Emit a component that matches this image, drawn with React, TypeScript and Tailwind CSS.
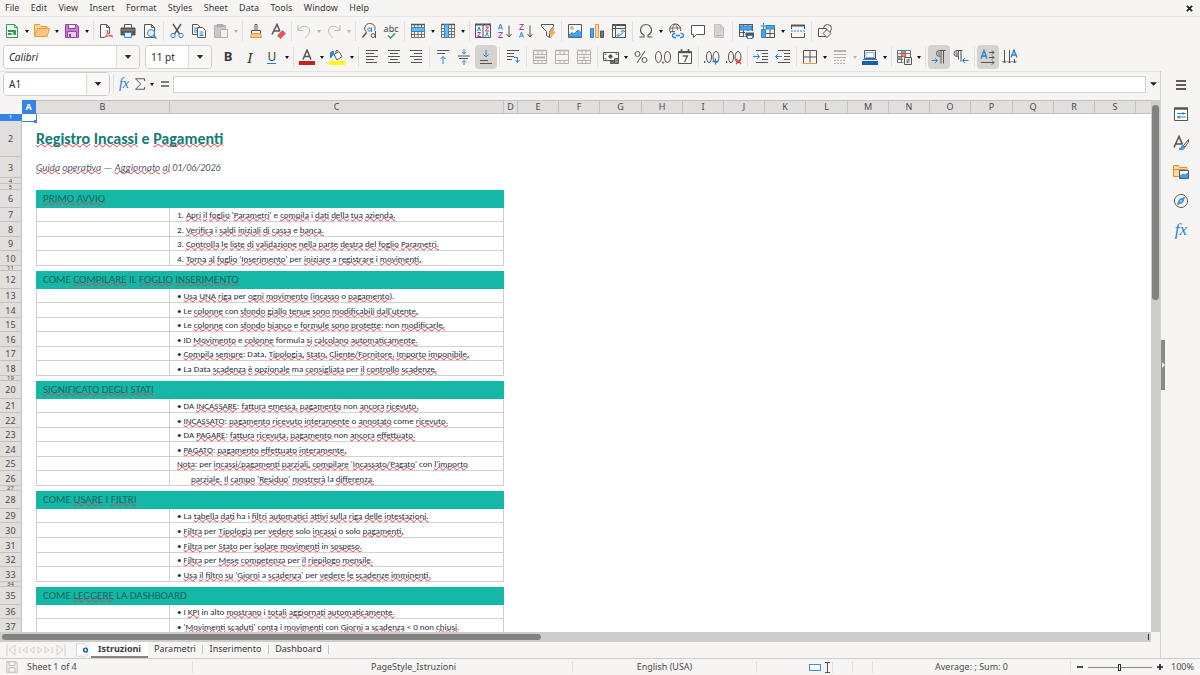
import React from "react";

const INK = "#555553";
const BLUE = "#2a86d4";

type IconProps = { children: React.ReactNode; className?: string };

function Icon({ children, className = "size-4" }: IconProps) {
  return (
    <svg viewBox="0 0 16 16" className={className} fill="none" stroke={INK} strokeWidth="1" aria-hidden="true">
      {children}
    </svg>
  );
}

type ToolProps = { label: string; children: React.ReactNode; active?: boolean; disabled?: boolean };

function Tool({ label, children, active, disabled }: ToolProps) {
  return (
    <button
      type="button"
      aria-label={label}
      aria-pressed={active}
      disabled={disabled}
      className={`flex h-6 w-[22px] min-w-0 items-center justify-center rounded ${active ? "bg-[#d5d2cf]" : ""}`}
    >
      {children}
    </button>
  );
}

function Arrow({ label, disabled }: { label: string; disabled?: boolean }) {
  return (
    <button type="button" aria-label={label} disabled={disabled} className="flex h-6 w-2 min-w-0 items-center justify-center">
      <svg viewBox="0 0 4 3" className="h-[3px] w-1 shrink-0" aria-hidden="true">
        <path d="M0 0h4L2 3z" fill={disabled ? "#b5b3b1" : "#111"} />
      </svg>
    </button>
  );
}

function Sep() {
  return (
    <div className="flex w-[5px] min-w-0 justify-center">
      <div className="h-5 w-px bg-[#e0dfdd]" />
    </div>
  );
}

const page = "M3.5 1.5h6l3 3v10h-9z M9.5 1.5v3h3";

function StandardBar() {
  return (
    <div role="toolbar" aria-label="Standard" className="ml-px flex h-7 w-full max-w-[835px] items-center">
      <Tool label="New">
        <Icon>
          <path d="M2.5 1.5h8l3 3v10h-11z" stroke="#2f9e54" fill="#fff" />
          <path d="M10.500 1.5v3h3" stroke="#2f9e54" />
          <path d="M4 7h8v5H4z" fill="#2f9e54" stroke="none" />
          <path d="M4 9.500h5 M7 11h3" stroke="#fff" />
        </Icon>
      </Tool>
      <Arrow label="New options" />
      <Tool label="Open">
        <Icon>
          <path d="M.5 13.500v-12h5l1.500 2h6v2" stroke="#e79a3c" fill="#fbd9a0" />
          <path d="M.5 13.500l3-8h12l-2.500 8z" stroke="#e79a3c" fill="#fbc883" />
        </Icon>
      </Tool>
      <Arrow label="Recent files" />
      <Tool label="Save">
        <Icon>
          <path d="M1.500 1.500h11l2 2v11h-13z" stroke="#9c3fae" fill="#c77bd3" />
          <path d="M4.500 1.500h7v4h-7z" stroke="#9c3fae" fill="#fff" />
          <path d="M3.500 8.500h9v6h-9z" stroke="#9c3fae" fill="#e9c9ee" />
          <path d="M6 11v3" stroke="#9c3fae" strokeWidth="2" />
        </Icon>
      </Tool>
      <Arrow label="Save options" />
      <Sep />
      <Tool label="Export as PDF">
        <Icon>
          <path d="M2.500 14.500v-13h6l3 3v6 M8.500 1.500v3h3 M2.500 14.500h4" fill="#fff" />
          <path d="M7 14c2-2 3-5 2.500-6.500s-1 0 .5 2.500 3 3.500 4.500 3.500-1.500-2-7.500.5z" stroke="#e0373d" />
        </Icon>
      </Tool>
      <Tool label="Print">
        <Icon>
          <path d="M4.500 5v-3.500h7V5" fill="#fff" />
          <path d="M1 5h14v7H1z" fill={INK} />
          <path d="M2 7h12" stroke="#999" />
          <path d="M4.500 9.500h7v5h-7z" stroke={BLUE} fill="#e4f1fb" />
        </Icon>
      </Tool>
      <Tool label="Print preview">
        <Icon>
          <path d="M2.500 1.500h7l3 3v10h-10z M9.500 1.500v3h3" fill="#fff" />
          <circle cx="9" cy="10" r="3.500" stroke={BLUE} fill="#e4f1fb" />
          <path d="M11.500 12.500l3 3" stroke={BLUE} strokeWidth="1.500" />
        </Icon>
      </Tool>
      <Sep />
      <Tool label="Cut">
        <Icon>
          <path d="M4 1l6.500 10 M12 1L5.500 11" strokeWidth="1.400" />
          <circle cx="4" cy="12.500" r="2.200" stroke={BLUE} />
          <circle cx="12" cy="12.500" r="2.200" stroke={BLUE} />
        </Icon>
      </Tool>
      <Tool label="Copy">
        <Icon>
          <path d="M1.500 1.500h5l3 3v7h-8z" fill="#fff" />
          <path d="M6.500 4.500h5l3 3v7h-8z" fill="#fff" />
          <path d="M3 5h3 M3 7h3 M3 9h3 M8.500 9h4 M8.500 11h4 M8.500 12.500h4" stroke={BLUE} />
        </Icon>
      </Tool>
      <Tool label="Paste" disabled>
        <Icon>
          <path d="M1.500 2.500h11v12h-11z" fill="#c9c7c5" stroke="#b5b3b1" />
          <path d="M4 1.500h6v2H4z" fill="#b5b3b1" stroke="#a9a7a5" />
          <path d="M7.500 6.500h7v8h-7z" fill="#eee" stroke="#b5b3b1" />
        </Icon>
      </Tool>
      <Arrow label="Paste options" disabled />
      <Sep />
      <Tool label="Clone formatting">
        <Icon>
          <path d="M7 7V1.500h2V7" fill="#fff" />
          <path d="M3.500 7.500h9v3h-9z" />
          <path d="M3.500 10.500h9l1 4h-11z" stroke="#e79a3c" fill="#fbc883" />
        </Icon>
      </Tool>
      <Tool label="Clear formatting">
        <Icon>
          <path d="M2 11.500L7 1.500l3 7 M4 8h5" strokeWidth="1.500" />
          <path d="M7.500 12.500l5-5 3 3-5 5z" fill="#e8525a" stroke="#d9434c" strokeWidth=".6" />
        </Icon>
      </Tool>
      <Sep />
      <Tool label="Undo" disabled>
        <Icon>
          <path d="M2 2v5.500h5.500 M2.500 7c3-5 10-5 11 0 .5 3-2 6-4.500 7.500" stroke="#bdbbb9" />
        </Icon>
      </Tool>
      <Arrow label="Undo history" disabled />
      <Tool label="Redo" disabled>
        <Icon>
          <path d="M14 2v5.500H8.500 M13.500 7c-3-5-10-5-11 0-.5 3 2 6 4.500 7.500" stroke="#bdbbb9" />
        </Icon>
      </Tool>
      <Arrow label="Redo history" disabled />
      <Sep />
      <Tool label="Find and replace">
        <Icon>
          <path d="M6 9.500a5 5 0 1 1 7.500-2" />
          <path d="M5.500 9.500L1.500 14.500" strokeWidth="1.500" />
          <circle cx="8.500" cy="6.500" r="1.700" stroke={BLUE} />
          <path d="M10.500 4.500v4.500" stroke={BLUE} />
          <circle cx="12" cy="12.500" r="2" />
          <path d="M14.500 8v7" />
        </Icon>
      </Tool>
      <Tool label="Spelling">
        <span className="flex flex-col items-center font-['Noto_Sans'] text-[9px] leading-[9px] text-[#444442]">
          abc
          <svg viewBox="0 0 10 6" className="h-[6px] w-[10px]" fill="none" stroke="#2f9e54" strokeWidth="1.500" aria-hidden="true">
            <path d="M2 2.500l2.500 2.500L9 .5" />
          </svg>
        </span>
      </Tool>
      <Sep />
      <Tool label="Row">
        <Icon>
          <path d="M1.500 2v12.500h13V2 M1 11.500h14 M4.500 8v6 M8 8v6 M11.500 8v6 M4.500 2v2 M8 2v2 M11.500 2v2" strokeWidth=".8" />
          <path d="M1 1.500h14" strokeWidth="1.500" />
          <path d="M1.500 4.500h13v4h-13z" fill="#6bb6ec" stroke={BLUE} />
        </Icon>
      </Tool>
      <Arrow label="Row options" />
      <Tool label="Column">
        <Icon>
          <path d="M1.500 2v12.500h13V2 M1 5.500h14 M1 8.500h14 M1 11.500h14 M11.500 2v12" strokeWidth=".8" />
          <path d="M1 1.500h14" strokeWidth="1.500" />
          <path d="M4.500 1.500h4v13h-4z" fill="#6bb6ec" stroke={BLUE} />
        </Icon>
      </Tool>
      <Arrow label="Column options" />
      <Sep />
      <Tool label="Sort">
        <Icon>
          <path d="M.5 2v12.500h15V2 M8 2v12.500" />
          <path d="M0 1.500h16" strokeWidth="2" />
          <path d="M2.500 8l1.500-4 1.500 4" stroke={BLUE} />
          <path d="M2.500 9.500h3l-3 4h3.500 M10.500 4h3l-3 4h3.500" stroke="#a03bb5" />
          <path d="M10.500 13.500l1.500-4 1.500 4" stroke={BLUE} />
        </Icon>
      </Tool>
      <Tool label="Sort ascending">
        <Icon>
          <path d="M1.500 6.500l2-5.500 2 5.500 M2.200 5h2.600" stroke={BLUE} />
          <path d="M1.500 9.500h4l-4 5h4.500" stroke="#a03bb5" />
          <path d="M12 2.500v11 M9.500 11l2.500 3 2.500-3" />
        </Icon>
      </Tool>
      <Tool label="Sort descending">
        <Icon>
          <path d="M1.500 1.500h4l-4 5h4.500" stroke="#a03bb5" />
          <path d="M1.500 14.500l2-5.500 2 5.500 M2.200 13h2.600" stroke={BLUE} />
          <path d="M12 2.500v11 M9.500 11l2.500 3 2.500-3" />
        </Icon>
      </Tool>
      <Tool label="AutoFilter">
        <Icon>
          <path d="M1.500 1.500h12v2l-4 5v6l-3-2v-4l-5-5z" />
          <path d="M12.500 5.500l-3.500 5h2.500l-1.500 4.500 5-6h-2.500l1.500-3.500z" fill="#fbb257" stroke="#e8923a" strokeWidth=".7" />
        </Icon>
      </Tool>
      <Sep />
      <Tool label="Insert image">
        <Icon>
          <path d="M1.500 1.500h13v13h-13z" fill="#fff" />
          <circle cx="5" cy="5" r="1.300" stroke="#e79a3c" fill="#fbc883" />
          <path d="M2 14v-2l3-2.500 2 1.500 4-4 3.500 3v4z" fill="#4ba5e6" stroke={BLUE} />
        </Icon>
      </Tool>
      <Tool label="Insert chart">
        <Icon>
          <path d="M1.500 5.500h3v9h-3z" fill="#4ba5e6" stroke={BLUE} />
          <path d="M6.500 1.500h3v13h-3z" fill="#fbd9a0" stroke="#e79a3c" />
          <path d="M11.500 8h3v6.500h-3z" fill="#777" />
        </Icon>
      </Tool>
      <Tool label="Insert pivot table">
        <Icon>
          <path d="M1.500 2v12.500h13V2 M4.500 2v12 M2 5.500h12" />
          <path d="M1 2h14" strokeWidth="2" />
          <path d="M6.500 12.500c4 0 5.500-2 5.500-5 M10 9l2-2 2 2 M8 10.500l-2 2 2 2" stroke={BLUE} />
        </Icon>
      </Tool>
      <Sep />
      <Tool label="Special character">
        <Icon>
          <path d="M1.500 14h4.500v-2c-2-1-3.500-2.500-3.500-5a5.500 5.500 0 0 1 11 0c0 2.500-1.500 4-3.500 5v2h4.500" strokeWidth="1.200" />
        </Icon>
      </Tool>
      <Arrow label="Recent characters" />
      <Tool label="Insert hyperlink">
        <Icon>
          <path d="M3 10a5.500 5.500 0 1 1 9.500-2" />
          <path d="M1.500 5h11 M2 8.500h5 M7 1c-3 3-3 6-2 8.500 M7 1c2 2 2.500 4 2.500 6" strokeWidth=".8" />
          <path d="M7.500 10.500h-1a2 2 0 0 0 0 4h1.500 M12.500 10.500h1a2 2 0 0 1 0 4H12 M8 12.500h4" stroke={BLUE} strokeWidth="1.300" />
        </Icon>
      </Tool>
      <Tool label="Insert comment">
        <Icon>
          <path d="M1.500 2.500h13v9h-8l-3 3v-3h-2z" fill="#fff" />
        </Icon>
      </Tool>
      <Tool label="Headers and footers" disabled>
        <Icon>
          <path d={page} fill="#d5d3d1" stroke="#c2c0be" />
          <path d="M5 12.500h6" stroke="#b5b3b1" />
        </Icon>
      </Tool>
      <Sep />
      <Tool label="Define print area">
        <Icon>
          <path d="M1.500 2v11.500h5 M14.500 2v6 M5.500 2v11 M10 2v6 M2 9.500h5" />
          <path d="M2 3h12v4H2z" fill="#4ba5e6" stroke={BLUE} />
          <path d="M1 1.500h14" />
          <path d="M8 10h8v4H8z" fill={INK} />
          <path d="M9.500 12.500h5v3h-5z" fill="#fff" stroke={BLUE} />
        </Icon>
      </Tool>
      <Tool label="Freeze rows and columns">
        <Icon>
          <path d="M5.500 6.500v8h9v-12h-6 M10 6v8 M6 10.500h8" />
          <path d="M1.500 6.500h4v8h-4z M6 2.500h8.500v3.500H6z" fill="#4ba5e6" stroke={BLUE} />
          <path d="M3.500 0v6 M.5 3h6" stroke={BLUE} />
        </Icon>
      </Tool>
      <Arrow label="Freeze options" />
      <Tool label="Split window">
        <Icon>
          <path d="M1.500 6V2 M14.500 6V2 M1.500 10v4.500h13V10" />
          <path d="M1 2.500h14" strokeWidth="2" />
          <path d="M1 8h14" stroke={BLUE} strokeDasharray="2 1" />
        </Icon>
      </Tool>
      <Sep />
      <Tool label="Show draw functions">
        <Icon>
          <circle cx="10.500" cy="5.500" r="4" />
          <path d="M1.500 5.500h8v8h-8z" fill="#f6f5f4" />
          <path d="M10 6.500l4 4-4 4-4-4z" fill="#f6f5f4" />
        </Icon>
      </Tool>
    </div>
  );
}

function Combo({ label, value, box, italic }: { label: string; value: string; box: string; italic?: boolean }) {
  return (
    <div className={`flex h-6 shrink-0 overflow-hidden rounded border border-[#cfccca] bg-white ${box}`}>
      <input
        aria-label={label}
        defaultValue={value}
        className={`min-w-0 flex-1 bg-white px-[5px] text-[10px] text-[#2b2b2b] outline-none ${italic ? "italic" : ""}`}
      />
      <button type="button" aria-label={`${label} list`} className="flex w-[23px] items-center justify-center border-l border-[#dcdad8] bg-[#f8f7f6]">
        <svg viewBox="0 0 8 5" className="h-1 w-2" aria-hidden="true">
          <path d="M0 0h8L4 5z" fill="#2b2b2b" />
        </svg>
      </button>
    </div>
  );
}

const mergeCells = (
  <>
    <path d="M1.500 2v12.500h13V2 M1.500 5.500h13 M1.500 11.500h13 M6 2v3 M10 2v3 M6 12v2 M10 12v2" stroke="#b5b3b1" />
    <path d="M1 1.500h14" stroke="#b5b3b1" strokeWidth="1.500" />
  </>
);

function FormattingBar() {
  return (
    <div role="toolbar" aria-label="Formatting" className="flex h-[26px] items-center pb-[2px] pl-[3px]">
      <Combo label="Font name" value="Calibri" box="w-[137px]" italic />
      <Combo label="Font size" value="11 pt" box="ml-[5px] w-[67px]" />
      <div className="ml-[5px] flex w-full max-w-[804px] items-center">
        <Tool label="Bold"><span className="font-['Noto_Sans'] text-[13px] font-bold text-[#3a3a38]">B</span></Tool>
        <Tool label="Italic"><span className="font-['Noto_Serif','Liberation_Serif',serif] text-[14px] italic text-[#3a3a38]">I</span></Tool>
        <Tool label="Underline">
          <span className="border-b border-[#1e7fd0] font-['Noto_Sans'] text-[12px] leading-[13px] text-[#3a3a38]">U</span>
        </Tool>
        <Arrow label="Underline options" />
        <Sep />
        <Tool label="Font color">
          <Icon>
            <path d="M4 10.500L8 1l4 9.500 M5.500 7.500h5" strokeWidth="1.500" />
            <path d="M0 12h16v4H0z" fill="#c4221f" stroke="none" />
          </Icon>
        </Tool>
        <Arrow label="Font color options" />
        <Tool label="Highlighting">
          <Icon>
            <path d="M5 5.500l5-3 3 5-5 3.500z M7 4V1.500h2" fill="#fff" />
            <path d="M1.500 9V3.500l3-1.500v3z" fill={BLUE} stroke={BLUE} />
            <path d="M0 12h16v4H0z" fill="#ffff00" stroke="none" />
          </Icon>
        </Tool>
        <Arrow label="Highlighting options" />
        <Sep />
        <Tool label="Align left"><Icon><path d="M2 1.500h12 M2 4.500h8 M2 7.500h12 M2 10.500h8 M2 13.500h11" /></Icon></Tool>
        <Tool label="Center"><Icon><path d="M2 1.500h12 M4 4.500h8 M2 7.500h12 M4 10.500h8 M2 13.500h12" /></Icon></Tool>
        <Tool label="Align right"><Icon><path d="M2 1.500h12 M6 4.500h8 M2 7.500h12 M6 10.500h8 M3 13.500h11" /></Icon></Tool>
        <Sep />
        <Tool label="Align top">
          <Icon>
            <path d="M2 1.500h12 M2 4.500h8" />
            <path d="M8 15V7.500 M5.500 10L8 7.500l2.500 2.500" stroke={BLUE} />
          </Icon>
        </Tool>
        <Tool label="Center vertically">
          <Icon>
            <path d="M2 7h12 M3 9.500h9" />
            <path d="M8 0v5 M6 3l2 2 2-2 M8 16v-4.500 M6 13.500l2-2 2 2" stroke={BLUE} />
          </Icon>
        </Tool>
        <Tool label="Align bottom" active>
          <Icon>
            <path d="M2 11.500h8 M2 14.500h12" />
            <path d="M8 1v7 M5.500 5.500L8 8l2.500-2.500" stroke={BLUE} />
          </Icon>
        </Tool>
        <Sep />
        <Tool label="Wrap text">
          <Icon>
            <path d="M2 1.500h12 M2 4.500h7 M2 7.500h7 M2 10.500h5" />
            <path d="M9 8.500h3.500v4.500 M10.500 11l2 2.500 2-2.500" stroke={BLUE} />
          </Icon>
        </Tool>
        <Sep />
        <Tool label="Merge and center" disabled><Icon>{mergeCells}<path d="M3 8.500h10" stroke="#b5b3b1" strokeWidth="2" /></Icon></Tool>
        <Tool label="Merge cells" disabled><Icon>{mergeCells}</Icon></Tool>
        <Tool label="Unmerge cells" disabled><Icon>{mergeCells}<path d="M8 5v6 M3 8.500h10" stroke="#b5b3b1" /></Icon></Tool>
        <Sep />
        <Tool label="Currency format">
          <Icon>
            <path d="M.5 3.500h15v8h-15z" fill="#fff" />
            <path d="M2 6V5h1.500 M12.500 5H14v1 M2 9v1h1.500" />
            <circle cx="7.500" cy="7.500" r="1.700" fill={INK} />
            <path d="M7.500 12.500h3v2h-3z M11.500 9.500h4v5h-4z" fill="#888" />
          </Icon>
        </Tool>
        <Arrow label="Currency options" />
        <Tool label="Percent format">
          <Icon>
            <circle cx="4.500" cy="5" r="2.500" />
            <circle cx="11.500" cy="11" r="2.500" />
            <path d="M12 2L4 14" />
          </Icon>
        </Tool>
        <Tool label="Number format">
          <Icon>
            <ellipse cx="3.500" cy="8" rx="3" ry="5.500" />
            <ellipse cx="12.500" cy="8" rx="3" ry="5.500" />
            <path d="M8 12.500v2" strokeWidth="1.500" />
          </Icon>
        </Tool>
        <Tool label="Date format">
          <Icon>
            <path d="M1.500 2.500h13v12h-13z" fill="#fff" />
            <path d="M1 3.500h14 M4.500 0v3 M11.500 0v3" strokeWidth="1.600" />
            <path d="M5.500 7h5l-3 6" strokeWidth="1.300" />
          </Icon>
        </Tool>
        <Sep />
        <Tool label="Add decimal place">
          <Icon>
            <path d="M.5 12v2" strokeWidth="1.500" />
            <ellipse cx="5" cy="8" rx="2.500" ry="5.500" />
            <ellipse cx="12" cy="8" rx="3" ry="5.500" />
            <path d="M8.500 12.500h6 M11.500 9.500v6" stroke={BLUE} strokeWidth="1.300" />
          </Icon>
        </Tool>
        <Tool label="Delete decimal place">
          <Icon>
            <path d="M.5 12v2" strokeWidth="1.500" />
            <ellipse cx="5" cy="8" rx="2.500" ry="5.500" />
            <ellipse cx="12" cy="8" rx="3" ry="5.500" />
            <path d="M10 10l5 5 M15 10l-5 5" stroke="#e0373d" strokeWidth="1.300" />
          </Icon>
        </Tool>
        <Sep />
        <Tool label="Increase indent">
          <Icon>
            <path d="M3 1.500h12 M9 4.500h6 M9 7.500h6 M9 10.500h6 M3 13.500h12" />
            <path d="M0 7.500h6.500 M4 5l2.500 2.500L4 10" stroke={BLUE} />
          </Icon>
        </Tool>
        <Tool label="Decrease indent">
          <Icon>
            <path d="M3 1.500h12 M9 4.500h6 M9 7.500h6 M9 10.500h6 M3 13.500h12" />
            <path d="M7 7.500H.5 M3 5L.5 7.500 3 10" stroke={BLUE} />
          </Icon>
        </Tool>
        <Sep />
        <Tool label="Borders">
          <Icon>
            <path d="M1.500 14V1.500h13V14 M8 1.500v12 M1.500 8h13" />
            <path d="M1 14.500h14" stroke="#e79a3c" />
          </Icon>
        </Tool>
        <Arrow label="Border options" />
        <Tool label="Border style" disabled>
          <Icon>
            <path d="M2 2h12" stroke="#b5b3b1" strokeWidth="2" />
            <path d="M2 5.500h12 M2 8.500h12" stroke="#b5b3b1" />
            <path d="M2 11.500h12 M2 14.500h12" stroke="#b5b3b1" strokeDasharray="2 1" />
          </Icon>
        </Tool>
        <Arrow label="Border style options" disabled />
        <Tool label="Border color">
          <Icon>
            <path d="M2.500 1.500h11v8h-11z" fill="#fff" />
            <path d="M4 3.500h8v5H4z" stroke="#6bb6ec" />
            <path d="M1 10.500h14" stroke={BLUE} />
            <path d="M0 12h16v4H0z" fill="#1c5fa8" stroke="none" />
          </Icon>
        </Tool>
        <Arrow label="Border color options" />
        <Sep />
        <Tool label="Conditional formatting">
          <Icon>
            <path d="M1.500 1.500h13v7 M1.500 1.500v12h6 M5.500 2v11 M9.500 2v6 M2 4.500h12 M2 7.500h6 M2 10.500h5" strokeWidth=".8" />
            <path d="M5.500 4.500h4v3h-4z" fill="#f08a8f" stroke="#d9434c" strokeWidth=".8" />
            <path d="M5.500 2h4v2h-4z M2 8h3v2H2z" fill="#5cbf7a" stroke="none" />
            <path d="M8.500 8.500h7v7h-7z" fill="#fff" />
            <path d="M10 11h4 M10 13h4 M13 9.500l-2 5" strokeWidth=".8" />
          </Icon>
        </Tool>
        <Arrow label="Conditional options" />
        <Sep />
        <Tool label="Left to right" active>
          <Icon>
            <path d="M14.500 1.500H8.500a3 3 0 0 0 0 6h1.500 M10 1.500v13 M12.500 1.500v13" />
            <path d="M7 2.500h3v5H7z" fill="#999" stroke="none" />
            <path d="M.5 11.500h6 M4 9l2.500 2.500L4 14" stroke={BLUE} />
          </Icon>
        </Tool>
        <Tool label="Right to left">
          <Icon>
            <path d="M9.500 1.500H4a3 3 0 0 0 0 6h1.500 M5.500 1.500v9 M8 1.500v11" />
            <path d="M2.500 2.500h3v5h-3z" fill="#999" stroke="none" />
            <path d="M15.500 11.500H9.500 M12 9l-2.500 2.500L12 14" stroke={BLUE} />
          </Icon>
        </Tool>
        <Sep />
        <Tool label="Text left to right" active>
          <Icon>
            <path d="M1 9.500L4 1.500l3 8 M2 7h4" stroke={BLUE} strokeWidth="1.400" />
            <path d="M9 3.500h5 M12 1.500l2 2-2 2 M9 8.500h5 M12 6.500l2 2-2 2 M1 13.500h13 M12 11.500l2 2-2 2" />
          </Icon>
        </Tool>
        <Tool label="Text top to bottom">
          <Icon>
            <path d="M9 8.500L12 1l3 7.500 M10 6h4" stroke={BLUE} strokeWidth="1.400" />
            <path d="M2.500 1v13 M.5 12l2 2 2-2 M7.500 1v13 M5.500 12l2 2 2-2 M12.500 10v4 M10.500 12l2 2 2-2" />
          </Icon>
        </Tool>
      </div>
    </div>
  );
}

function FormulaBar() {
  return (
    <div className="flex h-[29px] items-center border-t border-[#e4e2e0] pb-1 pl-[3px]">
      <Combo label="Name box" value="A1" box="w-[107px]" />
      <div className="ml-[3px] h-5 w-px bg-[#e0dfdd]" />
      <button type="button" aria-label="Function wizard" className="ml-[2px] w-4 text-center font-['Liberation_Serif',serif] text-[14px] leading-4 italic text-[#1e7fd0]">fx</button>
      <button type="button" aria-label="Select function" className="flex w-4 justify-center">
        <Icon className="size-3"><path d="M14 4V1H2l7 7-7 7h12v-3" strokeWidth="1.300" /></Icon>
      </button>
      <Arrow label="Function options" />
      <button type="button" aria-label="Formula" className="ml-[3px] flex w-3 justify-center">
        <svg viewBox="0 0 8 6" className="h-[6px] w-2" aria-hidden="true"><path d="M0 1h8 M0 5h8" stroke={INK} strokeWidth="1.600" /></svg>
      </button>
      <input aria-label="Input line" className="ml-[2px] h-[17px] min-w-0 flex-1 border border-[#d6d4d2] bg-white px-1 text-[10px] outline-none" />
      <button type="button" aria-label="Expand formula bar" className="flex w-[14px] justify-center">
        <svg viewBox="0 0 8 4" className="h-1 w-[7px]" aria-hidden="true"><path d="M0 0h8L4 4z" fill="#222" /></svg>
      </button>
    </div>
  );
}

/* Text between tildes is flagged by the spell checker. */
function Spell({ text }: { text: string }) {
  return (
    <>
      {text.split("~").map((part, i) =>
        i % 2 ? (
          <span key={i} className="underline decoration-[#e8383d] decoration-wavy decoration-1 -underline-offset-1 [text-decoration-skip-ink:none]">
            {part}
          </span>
        ) : (
          part
        ),
      )}
    </>
  );
}

type Row = { n: number; h: string; kind: "blank" | "title" | "subtitle" | "head" | "item" | "indent"; text?: string };

const rows: Row[] = [
  { n: 1, h: "h-[7px]", kind: "blank" },
  { n: 2, h: "h-[36px]", kind: "title", text: "~Registro~ ~Incassi~ e ~Pagamenti~" },
  { n: 3, h: "h-[21px]", kind: "subtitle", text: "~Guida~ ~operativa~ — ~Aggiornato~ ~al~ 01/06/2026" },
  { n: 4, h: "h-[6px]", kind: "blank" },
  { n: 5, h: "h-[6px]", kind: "blank" },
  { n: 6, h: "h-[18px]", kind: "head", text: "~PRIMO~ ~AVVIO~" },
  { n: 7, h: "h-[14px]", kind: "item", text: "1. ~Apri~ ~il~ ~foglio~ '~Parametri~' e ~compila~ i ~dati~ ~della~ ~tua~ ~azienda.~" },
  { n: 8, h: "h-[15px]", kind: "item", text: "2. ~Verifica~ i ~saldi~ ~iniziali~ ~di~ ~cassa~ e ~banca.~" },
  { n: 9, h: "h-[14px]", kind: "item", text: "3. ~Controlla~ ~le~ ~liste~ ~di~ ~validazione~ ~nella~ ~parte~ ~destra~ ~del~ ~foglio~ ~Parametri.~" },
  { n: 10, h: "h-[15px]", kind: "item", text: "4. ~Torna~ ~al~ ~foglio~ '~Inserimento~' per ~iniziare~ a ~registrare~ i ~movimenti.~" },
  { n: 11, h: "h-[5px]", kind: "blank" },
  { n: 12, h: "h-[18px]", kind: "head", text: "COME ~COMPILARE~ IL ~FOGLIO~ ~INSERIMENTO~" },
  { n: 13, h: "h-[14px]", kind: "item", text: "• ~Usa~ ~UNA~ ~riga~ per ~ogni~ ~movimento~ (~incasso~ o ~pagamento~)." },
  { n: 14, h: "h-[15px]", kind: "item", text: "• Le ~colonne~ con ~sfondo~ ~giallo~ ~tenue~ ~sono~ ~modificabili~ ~dall'utente.~" },
  { n: 15, h: "h-[14px]", kind: "item", text: "• Le ~colonne~ con ~sfondo~ ~bianco~ e ~formule~ ~sono~ ~protette~: non ~modificarle.~" },
  { n: 16, h: "h-[15px]", kind: "item", text: "• ID ~Movimento~ e ~colonne~ formula ~si~ ~calcolano~ ~automaticamente.~" },
  { n: 17, h: "h-[14px]", kind: "item", text: "• ~Compila~ ~sempre~: Data, ~Tipologia,~ ~Stato,~ ~Cliente/Fornitore,~ ~Importo~ ~imponibile.~" },
  { n: 18, h: "h-[15px]", kind: "item", text: "• La Data ~scadenza~ ~è~ ~opzionale~ ma ~consigliata~ per ~il~ ~controllo~ ~scadenze.~" },
  { n: 19, h: "h-[5px]", kind: "blank" },
  { n: 20, h: "h-[18px]", kind: "head", text: "~SIGNIFICATO~ ~DEGLI~ ~STATI~" },
  { n: 21, h: "h-[14px]", kind: "item", text: "• DA ~INCASSARE~: ~fattura~ ~emessa,~ ~pagamento~ non ~ancora~ ~ricevuto.~" },
  { n: 22, h: "h-[15px]", kind: "item", text: "• ~INCASSATO~: ~pagamento~ ~ricevuto~ ~interamente~ o ~annotato~ come ~ricevuto.~" },
  { n: 23, h: "h-[14px]", kind: "item", text: "• DA ~PAGARE~: ~fattura~ ~ricevuta,~ ~pagamento~ non ~ancora~ ~effettuato.~" },
  { n: 24, h: "h-[15px]", kind: "item", text: "• ~PAGATO~: ~pagamento~ ~effettuato~ ~interamente.~" },
  { n: 25, h: "h-[14px]", kind: "item", text: "~Nota~: per ~incassi/pagamenti~ ~parziali,~ ~compilare~ '~Incassato/Pagato~' con ~l'importo~" },
  { n: 26, h: "h-[15px]", kind: "indent", text: "~parziale.~ ~Il~ ~campo~ '~Residuo~' ~mostrerà~ la ~differenza.~" },
  { n: 27, h: "h-[5px]", kind: "blank" },
  { n: 28, h: "h-[18px]", kind: "head", text: "COME ~USARE~ I ~FILTRI~" },
  { n: 29, h: "h-[14px]", kind: "item", text: "• La ~tabella~ ~dati~ ha i ~filtri~ ~automatici~ ~attivi~ ~sulla~ ~riga~ ~delle~ ~intestazioni.~" },
  { n: 30, h: "h-[15px]", kind: "item", text: "• ~Filtra~ per ~Tipologia~ per ~vedere~ solo ~incassi~ o solo ~pagamenti.~" },
  { n: 31, h: "h-[15px]", kind: "item", text: "• ~Filtra~ per ~Stato~ per ~isolare~ ~movimenti~ in ~sospeso.~" },
  { n: 32, h: "h-[14px]", kind: "item", text: "• ~Filtra~ per ~Mese~ ~competenza~ per ~il~ ~riepilogo~ ~mensile.~" },
  { n: 33, h: "h-[15px]", kind: "item", text: "• ~Usa~ ~il~ ~filtro~ ~su~ '~Giorni~ a ~scadenza~' per ~vedere~ ~le~ ~scadenze~ ~imminenti.~" },
  { n: 34, h: "h-[5px]", kind: "blank" },
  { n: 35, h: "h-[18px]", kind: "head", text: "COME ~LEGGERE~ LA DASHBOARD" },
  { n: 36, h: "h-[14px]", kind: "item", text: "• I ~KPI~ in alto ~mostrano~ i ~totali~ ~aggiornati~ ~automaticamente.~" },
  { n: 37, h: "h-[15px]", kind: "item", text: "• '~Movimenti~ ~scaduti~' ~conta~ i ~movimenti~ con ~Giorni~ a ~scadenza~ < 0 non ~chiusi.~" },
];

const columns: [string, string][] = [
  ["A", "w-[14px]"], ["B", "w-[134px]"], ["C", "w-[334px]"], ["D", "w-[14px]"],
  ["E", "w-[41px]"], ["F", "w-[41px]"], ["G", "w-[42px]"], ["H", "w-[41px]"], ["I", "w-[41px]"],
  ["J", "w-[41px]"], ["K", "w-[41px]"], ["L", "w-[42px]"], ["M", "w-[41px]"], ["N", "w-[41px]"],
  ["O", "w-[41px]"], ["P", "w-[42px]"], ["Q", "w-[41px]"], ["R", "w-[41px]"], ["S", "w-[41px]"],
];

function RowCells({ row }: { row: Row }) {
  const text = row.text ? <Spell text={row.text} /> : null;
  switch (row.kind) {
    case "title":
      return <td colSpan={2} className="p-0 text-[16px] leading-5 font-bold text-[#147c72]">{text}</td>;
    case "subtitle":
      return <td colSpan={2} className="p-0 text-[10px] leading-3 text-[#555b66] italic">{text}</td>;
    case "head":
      return (
        <td colSpan={2} className="border-r border-l border-[#15b8a6] bg-[#15b8a6] p-0 pb-px pl-[6px] text-[11px] leading-3 text-[#12665e]">
          {text}
        </td>
      );
    case "item":
    case "indent":
      return (
        <>
          <td className="border-r border-b border-l border-[#d0d0d0] p-0" />
          <td className={`border-r border-b border-[#d0d0d0] p-0 text-[9px] leading-[13px] whitespace-nowrap text-[#273142] ${row.kind === "indent" ? "pl-[21px]" : "pl-[7px]"}`}>
            {text}
          </td>
        </>
      );
    default:
      return <td colSpan={2} className="p-0" />;
  }
}

function Sheet() {
  return (
    <div className="relative min-w-0 flex-1 overflow-hidden bg-white">
      <table className="w-full table-fixed border-separate border-spacing-0">
        <colgroup>
          <col className="w-[22px]" />
          {columns.map(([name, width]) => <col key={name} className={width} />)}
          <col />
        </colgroup>
        <thead>
          <tr className="h-[14px] text-[9px] leading-[12px] text-[#4a4a48]">
            <td className="bg-[#f6f5f4] p-0" />
            {columns.map(([name]) => (
              <th
                key={name}
                scope="col"
                className={`border-r p-0 ${name === "A" ? "border-[#3584e4] bg-[#3584e4] font-bold text-white" : "border-y border-[#c4c2c0] bg-[#e0dfde] font-normal"}`}
              >
                {name}
              </th>
            ))}
            <td className="border-y border-[#c4c2c0] bg-[#e0dfde] p-0" />
          </tr>
        </thead>
        <tbody className="font-['Carlito','Lato',sans-serif]">
          {rows.map((row) => {
            const small = row.h === "h-[5px]" || row.h === "h-[6px]" || row.h === "h-[7px]";
            return (
              <tr key={row.n} className={row.h}>
                <th
                  scope="row"
                  className={`border-r border-b p-0 text-center font-['Noto_Sans',sans-serif] font-normal ${
                    row.n === 1 ? "border-[#3584e4] bg-[#3584e4] text-white" : "border-[#c4c2c0] bg-[#e0dfde] text-[#4a4a48]"
                  } ${small ? "text-[6px] leading-[4px]" : "text-[9px] leading-[13px]"}`}
                >
                  {row.n}
                </th>
                <td className="p-0" />
                <RowCells row={row} />
                <td colSpan={17} className="p-0" />
              </tr>
            );
          })}
        </tbody>
      </table>
      <div className="absolute top-[14px] left-[22px] h-2 w-[15px] border-r border-b border-[#3584e4]" />
      <div className="absolute top-[20px] left-[34px] size-[3px] bg-[#3584e4]" />
    </div>
  );
}

function SideBar() {
  return (
    <aside className="flex w-[39px] shrink-0 items-stretch">
      <button type="button" aria-label="Collapse sidebar" className="flex h-[50px] w-1 items-center justify-center self-center bg-[#8a8a88]">
        <svg viewBox="0 0 3 6" className="h-[6px] w-[3px]" aria-hidden="true"><path d="M0 0v6l3-3z" fill="#eee" /></svg>
      </button>
      <nav aria-label="Sidebar decks" className="flex flex-1 flex-col items-center gap-[13px] pt-[6px] pr-[3px]">
        <button type="button" aria-label="Sidebar settings"><Icon><path d="M3 4h10 M3 8h10 M3 12h10" stroke="#2b2b2b" strokeWidth="1.500" /></Icon></button>
        <button type="button" aria-label="Properties">
          <Icon>
            <path d="M1.500 2v12.500h13V2" fill="#fff" />
            <path d="M1 2.500h14" strokeWidth="2.500" />
            <path d="M4 7.500h9 M10 6v3 M4 11h9" stroke={BLUE} />
            <path d="M6 9.500v3" />
          </Icon>
        </button>
        <button type="button" aria-label="Styles">
          <Icon>
            <path d="M1 12.500L6 1.500l3.500 8 M3 9h6" strokeWidth="1.600" />
            <path d="M15.500 4.500l-5 6 1.500 1.500 3.500-5z" />
            <path d="M10 10.500l2 2c-1 2-3.500 2.500-6 1.500 2 0 2-3 4-3.500z" fill="#4ba5e6" stroke={BLUE} />
          </Icon>
        </button>
        <button type="button" aria-label="Gallery">
          <Icon>
            <path d="M.5 12.500v-11h5l1.500 2h7v9z" fill="#fbd9a0" stroke="#e08a2e" />
            <path d="M.5 5.500h12" stroke="#e08a2e" />
            <path d="M6.500 6.500h9v8h-9z" fill="#fff" />
            <path d="M7 14v-2l3-2 2 1 3-2v5z" fill="#4ba5e6" stroke={BLUE} />
          </Icon>
        </button>
        <button type="button" aria-label="Navigator">
          <Icon>
            <circle cx="8" cy="8" r="6.500" fill="#fff" />
            <path d="M11.500 4.500L9.500 9.500l-5 2 2-5z" fill="#4ba5e6" stroke={BLUE} />
            <circle cx="8" cy="8" r=".8" fill="#fff" stroke="none" />
          </Icon>
        </button>
        <button type="button" aria-label="Functions" className="font-['Liberation_Serif',serif] text-[17px] leading-4 italic text-[#1e7fd0]">fx</button>
      </nav>
    </aside>
  );
}

function SheetTabs() {
  return (
    <div className="flex h-4 shrink-0 items-stretch text-[9px] leading-[14px]">
      <div className="flex items-center pl-[6px]">
        {["First sheet", "Previous sheet", "Next sheet", "Last sheet"].map((label, i) => (
          <button key={label} type="button" aria-label={label} disabled className="w-[15px]">
            <svg viewBox="0 0 15 12" className="h-3 w-[15px]" fill="none" stroke="#d3d1cf" aria-hidden="true">
              {i === 0 && <path d="M1 0v12 M9 1L3 6l6 5z M14 3v6" />}
              {i === 1 && <path d="M6 3L2 6l4 3z M13 3L9 6l4 3z" />}
              {i === 2 && <path d="M2 3l4 3-4 3z M9 3l4 3-4 3z" />}
              {i === 3 && <path d="M14 0v12 M6 1l6 5-6 5z M1 3v6" />}
            </svg>
          </button>
        ))}
      </div>
      <button type="button" aria-label="Add sheet" className="ml-[7px] flex w-[18px] items-center justify-center">
        <Icon className="size-[14px]">
          <path d="M1.500 1h9l3 3v11h-12z" fill="#fff" stroke="#d3d1cf" />
          <circle cx="12" cy="8" r="3" fill="#1c5fa8" stroke="none" />
          <path d="M12 6.500v3 M10.500 8h3" stroke="#fff" />
        </Icon>
      </button>
      <div role="tablist" className="flex items-start text-[#3a3a38]">
        <button type="button" role="tab" aria-selected="true" className="h-4 w-[57px] border-b-2 border-[#858583] bg-white font-bold">Istruzioni</button>
        <button type="button" role="tab" aria-selected="false" className="h-[14px] w-[54px]">Parametri</button>
        <div className="mt-[3px] h-[9px] w-px bg-[#c9c7c5]" />
        <button type="button" role="tab" aria-selected="false" className="h-[14px] w-[65px]">Inserimento</button>
        <div className="mt-[3px] h-[9px] w-px bg-[#c9c7c5]" />
        <button type="button" role="tab" aria-selected="false" className="h-[14px] w-[59px]">Dashboard</button>
        <div className="mt-[3px] h-[9px] w-px bg-[#c9c7c5]" />
      </div>
    </div>
  );
}

function StatusBar() {
  return (
    <footer className="flex h-[17px] shrink-0 items-center border-t border-[#cfccca] pl-[6px] text-[9px] leading-3 text-[#4a4a48]">
      <Icon className="size-3"><path d="M1 1h12l2 2v12H1z M4 1v5h8V1 M4 15V9h8v6" stroke="#a9a7a5" /></Icon>
      <span className="w-[175px] border-r border-[#e0dfdd] pl-[9px]">Sheet 1 of 4</span>
      <span className="w-[172px] border-r border-[#e0dfdd]" />
      <span className="w-[208px] border-r border-[#e0dfdd] pl-[6px]">PageStyle_Istruzioni</span>
      <span className="w-[184px] border-r border-[#e0dfdd] text-center">English (USA)</span>
      <span className="w-[45px] border-r border-[#e0dfdd]" />
      <span className="flex w-[31px] items-center gap-1 border-r border-[#e0dfdd] pl-[7px]">
        <span className="h-[7px] w-3 border border-[#3b92d0] bg-white" />
        <svg viewBox="0 0 5 11" className="h-[11px] w-[5px]" fill="none" stroke={INK} aria-hidden="true"><path d="M0 .5h5 M0 10.500h5 M2.500 0v11" /></svg>
      </span>
      <span className="w-5 border-r border-[#e0dfdd]">&nbsp;</span>
      <span className="w-5 border-r border-[#e0dfdd]">&nbsp;</span>
      <span className="min-w-0 flex-1 border-r border-[#e0dfdd] text-center">Average: ; Sum: 0</span>
      <span className="flex items-center gap-1 pl-[5px]">
        <button type="button" aria-label="Zoom out" className="flex w-2"><svg viewBox="0 0 8 8" className="size-2" aria-hidden="true"><path d="M1 4h6" stroke="#222" strokeWidth="1.600" /></svg></button>
        <input
          type="range"
          aria-label="Zoom"
          defaultValue={49}
          className="h-2 w-[64px] appearance-none bg-[linear-gradient(#8a8a88,#8a8a88)] bg-[length:100%_1px] bg-center bg-no-repeat [&::-webkit-slider-thumb]:h-[7px] [&::-webkit-slider-thumb]:w-[3px] [&::-webkit-slider-thumb]:appearance-none [&::-webkit-slider-thumb]:border [&::-webkit-slider-thumb]:border-[#333333] [&::-webkit-slider-thumb]:bg-white"
        />
        <button type="button" aria-label="Zoom in" className="flex w-2"><svg viewBox="0 0 8 8" className="size-2" aria-hidden="true"><path d="M1 4h6 M4 1v6" stroke="#222" strokeWidth="1.600" /></svg></button>
      </span>
      <span className="w-[36px] pr-[6px] text-right">100%</span>
    </footer>
  );
}

export default function App() {
  return (
    <div className="flex h-screen flex-col overflow-hidden bg-[#f6f5f4] font-['Noto_Sans',sans-serif] text-[#2e3436]">
      <header>
        <div className="flex h-[17px] items-center justify-between border-b border-[#e8e6e4] pr-[7px] pl-[5px]">
          <nav aria-label="Menu" className="flex w-[364px] justify-between text-[9px] leading-3 text-[#3a3a38]">
            {["File", "Edit", "View", "Insert", "Format", "Styles", "Sheet", "Data", "Tools", "Window", "Help"].map((item) => (
              <button key={item} type="button">{item}</button>
            ))}
          </nav>
          <button type="button" aria-label="Close document">
            <svg viewBox="0 0 8 8" className="size-[7px]" aria-hidden="true"><path d="M1 1l6 6 M7 1L1 7" stroke="#222" strokeWidth="2" /></svg>
          </button>
        </div>
        <StandardBar />
        <FormattingBar />
      </header>
      <div className="flex min-h-0 flex-1">
        <div className="flex min-w-0 flex-1 flex-col border-r border-[#d3d1cf]">
          <FormulaBar />
          <div className="flex min-h-0 flex-1">
            <Sheet />
            <div className="w-[9px] shrink-0 bg-[#cdcdcc] px-px pt-[5px]"><div className="h-[37%] rounded-full bg-[#828281]" /></div>
          </div>
          <div className="mr-[9px] flex h-[10px] shrink-0 items-center bg-[#cdcdcc] px-[2px]">
            <div className="h-[6px] w-[47%] rounded-full bg-[#828281]" />
            <div className="ml-auto h-[6px] w-px bg-[#333333]" />
          </div>
          <SheetTabs />
        </div>
        <SideBar />
      </div>
      <StatusBar />
    </div>
  );
}
